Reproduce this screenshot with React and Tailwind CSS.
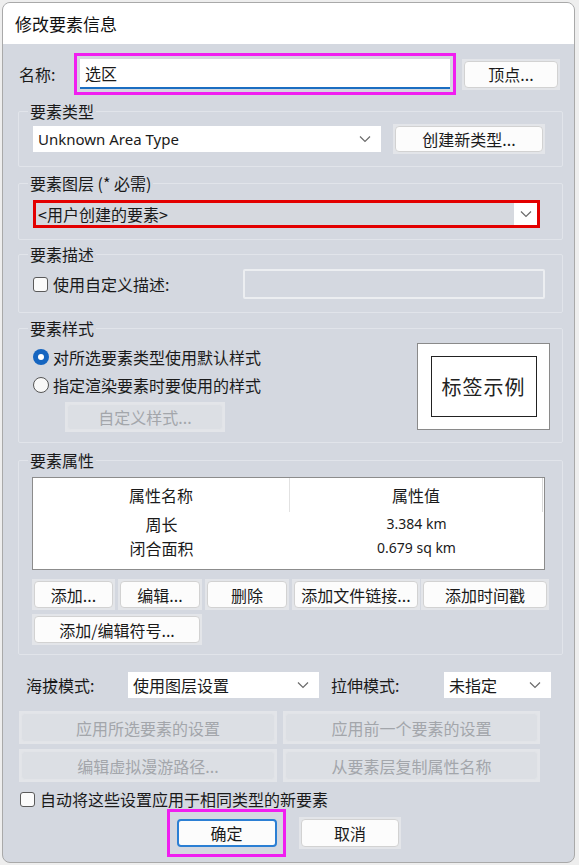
import React from "react";

const font = { fontFamily: '"Noto Sans CJK SC", "Noto Sans", sans-serif' };
const latin = { fontFamily: '"Noto Sans", "Noto Sans CJK SC", sans-serif' };

const Chevron = ({ className = "" }) => (
  <svg width="12" height="8" viewBox="0 0 12 8" className={className}>
    <polyline points="1,1.5 6,6.5 11,1.5" fill="none" stroke="#6b6b6b" strokeWidth="1.2" />
  </svg>
);

const Btn = ({ children, className = "", disabled = false }) => (
  <div className={`bg-[#e3e5e9] p-[2px] shrink-0 ${className}`}>
    <div
      className={`h-full rounded-[4px] border flex items-center justify-center text-[16px] leading-none ${
        disabled
          ? "bg-[#dcdfe4] border-[#e2e4e8] text-[#a3a6ab]"
          : "bg-[#fcfcfc] border-[#d2d2d2] text-[#1a1a1a]"
      }`}
    >
      {children}
    </div>
  </div>
);

const Group = ({ title, className = "", inner = "", children }) => (
  <fieldset className={`border border-[#e1e4ea] rounded-[2px] w-[545px] ${className}`}>
    <legend className="ml-[9px] px-[2px] text-[16px] leading-[20px] text-[#1a1a1a]">{title}</legend>
    <div className={inner}>{children}</div>
  </fieldset>
);

const Select = ({ value, className = "", style }) => (
  <div className={`bg-white flex items-center justify-between pl-[5px] pr-[10px] text-[#1a1a1a] ${className}`} style={style}>
    <span>{value}</span>
    <Chevron />
  </div>
);

const Check = () => (
  <div className="w-[15px] h-[15px] shrink-0 rounded-[3px] border border-[#5a5a5a] bg-[#fbfbfb]" />
);

export default function App() {
  return (
    <div className="w-[579px] h-[865px] bg-[#eeeeee] pt-[2px] pl-[2px]" style={font}>
      <div className="w-[573px] h-[861px] rounded-[8px] border border-[#a9a9a9] overflow-hidden flex flex-col bg-[#d4d8e0]">
        {/* title bar */}
        <div className="h-[41px] shrink-0 bg-white flex items-center pl-[12px] text-[17px] text-[#111]">修改要素信息</div>

        <div className="flex-1 pl-[15px] text-[#1a1a1a] text-[16px]">
          {/* name row */}
          <div className="flex items-center mt-[9px] h-[42px]">
            <span className="w-[56px] pl-[1px]">名称:</span>
            <div className="w-[382px] h-[42px] border-[3px] border-[#f01ef0] p-[3px]">
              <div className="h-full bg-white border-b-2 border-[#1b6ec2] flex items-center pl-[5px] text-[16px]">选区</div>
            </div>
            <Btn className="ml-[6px] w-[98px] h-[31px]">顶点...</Btn>
          </div>

          {/* feature type */}
          <Group title="要素类型" className="mt-[6px] h-[66px]" inner="pl-[14px] pt-[3px]">
            <div className="flex items-center">
              <Select value="Unknown Area Type" className="w-[348px] h-[26px] text-[15px]" style={latin} />
              <Btn className="ml-[12px] w-[152px] h-[30px]">创建新类型...</Btn>
            </div>
          </Group>

          {/* feature layer */}
          <Group title="要素图层 (* 必需)" className="mt-[6px] h-[67px]" inner="pl-[14px] pt-[7px]">
            <div className="w-[507px] h-[28px] border-[3px] border-[#e30000] bg-[#d6d9df] flex items-center justify-between">
              <span className="pl-[2px]">&lt;用户创建的要素&gt;</span>
              <div className="h-full w-[23px] bg-white flex items-center justify-center">
                <Chevron />
              </div>
            </div>
          </Group>

          {/* description */}
          <Group title="要素描述" className="mt-[4px] h-[69px]" inner="pl-[14px] pt-[5px]">
            <div className="flex items-center">
              <Check />
              <span className="ml-[5px] w-[184px]">使用自定义描述:</span>
              <div className="ml-[6px] w-[302px] h-[30px] border-2 border-[#eceef1] rounded-[2px]" />
            </div>
          </Group>

          {/* style */}
          <Group title="要素样式" className="mt-[5px] h-[125px]" inner="pl-[14px] pt-[5px]">
            <div className="flex">
              <div className="flex flex-col w-[384px]">
                <div className="flex items-center h-[28px]">
                  <div className="w-[16px] h-[16px] rounded-full bg-[#1565c0] flex items-center justify-center">
                    <div className="w-[6px] h-[6px] rounded-full bg-white" />
                  </div>
                  <span className="ml-[4px]">对所选要素类型使用默认样式</span>
                </div>
                <div className="flex items-center h-[28px]">
                  <div className="w-[16px] h-[16px] rounded-full border border-[#555] bg-[#f8f8f8]" />
                  <span className="ml-[4px]">指定渲染要素时要使用的样式</span>
                </div>
                <Btn disabled className="ml-[32px] mt-[3px] w-[160px] h-[30px]">自定义样式...</Btn>
              </div>
              <div className="w-[133px] h-[87px] bg-white border border-[#8a8a8a] flex items-center justify-center">
                <div className="w-[106px] h-[61px] border border-[#222] flex items-center justify-center text-[20px] tracking-[1px] text-[#222]">
                  标签示例
                </div>
              </div>
            </div>
          </Group>

          {/* attributes */}
          <Group title="要素属性" className="mt-[7px] h-[205px]" inner="pl-[13px] pt-[7px]">
            <div className="w-[513px] h-[93px] bg-white border border-[#8c8c8c]">
              <div className="flex h-[34px]">
                <div className="w-[257px] flex items-center justify-center border-r border-[#e2e2e2]">属性名称</div>
                <div className="w-[253px] flex items-center justify-center border-r border-[#d8d8d8]">属性值</div>
              </div>
              <div className="flex leading-[24px]">
                <div className="w-[257px] flex flex-col items-center">
                  <span>周长</span>
                  <span>闭合面积</span>
                </div>
                <div className="w-[253px] flex flex-col items-center text-[14px]" style={latin}>
                  <span>3.384 km</span>
                  <span>0.679 sq km</span>
                </div>
              </div>
            </div>
            <div className="flex mt-[9px]">
              <Btn className="w-[83px] h-[31px]">添加...</Btn>
              <Btn className="ml-[3px] w-[84px] h-[31px]">编辑...</Btn>
              <Btn className="ml-[3px] w-[84px] h-[31px]">删除</Btn>
              <Btn className="ml-[3px] w-[128px] h-[31px]">添加文件链接...</Btn>
              <Btn className="ml-[1px] w-[128px] h-[31px]">添加时间戳</Btn>
            </div>
            <Btn className="mt-[4px] w-[170px] h-[31px]">添加/编辑符号...</Btn>
          </Group>

          {/* elevation */}
          <div className="flex items-center mt-[16px] h-[27px]">
            <span className="ml-[8px] w-[102px]">海拔模式:</span>
            <Select value="使用图层设置" className="w-[191px] h-[26px]" />
            <span className="ml-[12px] w-[113px]">拉伸模式:</span>
            <Select value="未指定" className="w-[107px] h-[26px]" />
          </div>

          <div className="flex mt-[13px] gap-[6px] ml-[1px]">
            <Btn disabled className="w-[258px] h-[33px]">应用所选要素的设置</Btn>
            <Btn disabled className="w-[257px] h-[33px]">应用前一个要素的设置</Btn>
          </div>
          <div className="flex mt-[5px] gap-[6px] ml-[1px]">
            <Btn disabled className="w-[258px] h-[33px]">编辑虚拟漫游路径...</Btn>
            <Btn disabled className="w-[257px] h-[33px]">从要素层复制属性名称</Btn>
          </div>

          <div className="flex items-center mt-[8px] ml-[2px] h-[18px]">
            <Check />
            <span className="ml-[5px]">自动将这些设置应用于相同类型的新要素</span>
          </div>

          <div className="flex items-center mt-[1px]">
            <div className="ml-[149px] w-[119px] h-[48px] border-[3px] border-[#f01ef0] flex items-center justify-center">
              <div className="w-[100px] h-[28px] rounded-[4px] border-2 border-[#2b7fd4] bg-[#fcfcfc] flex items-center justify-center">
                确定
              </div>
            </div>
            <Btn className="ml-[13px] w-[102px] h-[32px]">取消</Btn>
          </div>
        </div>
      </div>
    </div>
  );
}
